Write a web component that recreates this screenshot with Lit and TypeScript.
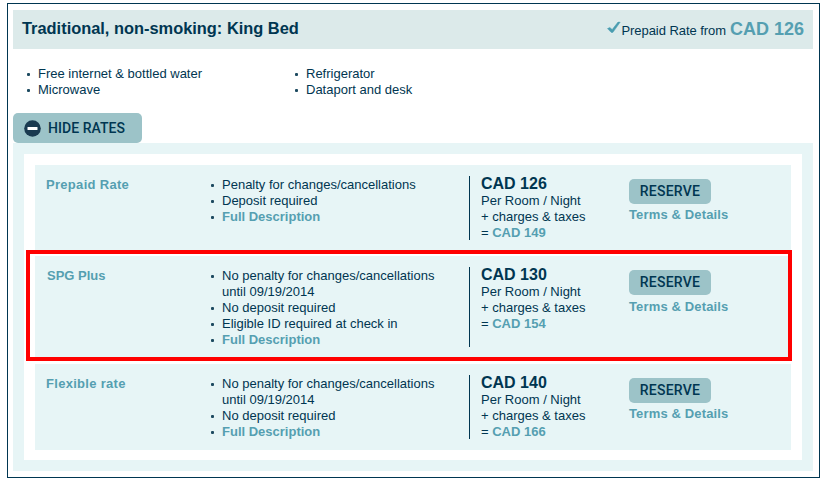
import { LitElement, html, css } from "lit";
import { customElement, property } from "lit/decorators.js";
import { classMap } from "lit/directives/class-map.js";

interface Rate {
  name: string;
  terms: string[];
  price: string;
  total: string;
  highlighted?: boolean;
}

const RATES: Rate[] = [
  {
    name: "Prepaid Rate",
    terms: ["Penalty for changes/cancellations", "Deposit required"],
    price: "CAD 126",
    total: "CAD 149",
  },
  {
    name: "SPG Plus",
    terms: [
      "No penalty for changes/cancellations until 09/19/2014",
      "No deposit required",
      "Eligible ID required at check in",
    ],
    price: "CAD 130",
    total: "CAD 154",
    highlighted: true,
  },
  {
    name: "Flexible rate",
    terms: [
      "No penalty for changes/cancellations until 09/19/2014",
      "No deposit required",
    ],
    price: "CAD 140",
    total: "CAD 166",
  },
];

const bulletList = css`
  ul {
    list-style: none;
    margin: 0;
    padding: 1px 0 0;
  }
  li {
    position: relative;
    padding-left: 11px;
  }
  li:last-child {
    height: 15px;
  }
  li::before {
    content: "";
    position: absolute;
    left: 0;
    top: 7px;
    width: 3px;
    height: 3px;
    border-radius: 1px;
    background: #1d4a60;
  }
`;

@customElement("rate-row")
export class RateRow extends LitElement {
  @property({ attribute: false }) rate!: Rate;

  static styles = [
    bulletList,
    css`
      :host {
        display: grid;
        grid-template-columns: 165px 258px 160px 1fr;
        padding: 11px;
        background: #e7f5f6;
      }
      .name,
      .link {
        color: #559fb1;
        font-weight: bold;
      }
      .name {
        padding-top: 1px;
        letter-spacing: 0.3px;
      }
      .name.highlighted {
        padding-left: 1px;
        letter-spacing: 0;
      }
      .terms {
        width: 240px;
      }
      .cost {
        border-left: 1px solid #003651;
        padding-left: 11px;
      }
      .price {
        font-size: 16px;
        font-weight: bold;
        line-height: 16px;
        margin-bottom: 1px;
      }
      .total {
        height: 15px;
      }
      .action {
        padding-top: 3px;
      }
      button {
        display: block;
        width: 82px;
        height: 25px;
        padding: 0;
        border: 0;
        border-radius: 5px;
        background: #9cc3c8;
        color: #003651;
        font: 500 14px/25px Roboto, "Liberation Sans", sans-serif;
        letter-spacing: 0.25px;
        margin-bottom: 3px;
      }
      .highlighted button {
        margin-bottom: 4px;
      }
      .details {
        letter-spacing: 0.14px;
      }
    `,
  ];

  render() {
    const r = this.rate;
    const highlighted = !!r.highlighted;
    return html`
      <div class=${classMap({ name: true, highlighted })}>${r.name}</div>
      <ul class="terms">
        ${r.terms.map((t) => html`<li>${t}</li>`)}
        <li><span class="link">Full Description</span></li>
      </ul>
      <div class="cost">
        <div class="price">${r.price}</div>
        <div>Per Room / Night</div>
        <div>+ charges &amp; taxes</div>
        <div class="total">= <span class="link">${r.total}</span></div>
      </div>
      <div class=${classMap({ action: true, highlighted })}>
        <button>RESERVE</button>
        <span class="link details">Terms &amp; Details</span>
      </div>
    `;
  }
}

@customElement("app-root")
export class AppRoot extends LitElement {
  static styles = [
    bulletList,
    css`
      :host {
        display: block;
        box-sizing: border-box;
        height: 479px;
        padding: 3px 0 0 7px;
        background: #fff;
        color: #003651;
        font: 13px/16px "Liberation Sans", Arial, sans-serif;
      }
      .frame {
        position: relative;
        box-sizing: border-box;
        width: 813px;
        height: 475px;
        border: 1px solid #003651;
        padding: 6px 6px 6px 5px;
      }
      header {
        display: flex;
        align-items: center;
        justify-content: space-between;
        height: 39px;
        padding: 0 9px;
        box-sizing: border-box;
        background: #dceaea;
      }
      h1 {
        margin: 0;
        padding-bottom: 4px;
        font-size: 16.4px;
        line-height: 20px;
      }
      .from {
        display: flex;
        align-items: baseline;
        padding-bottom: 2px;
        letter-spacing: -0.06px;
      }
      .from svg {
        width: 15px;
        height: 15px;
      }
      .from strong {
        margin-left: 4px;
        font-size: 18px;
        line-height: 20px;
        letter-spacing: 0;
        color: #559fb1;
      }
      .amenities {
        display: grid;
        grid-template-columns: 268px 268px;
        padding: 16px 14px;
      }
      .toggle {
        display: flex;
        align-items: center;
        width: 129px;
        height: 30px;
        padding: 0 0 0 11px;
        box-sizing: border-box;
        border: 0;
        border-radius: 5px;
        background: #9cc3c8;
        color: #003651;
        font: 500 14px/30px Roboto, "Liberation Sans", sans-serif;
        letter-spacing: 0.05px;
      }
      .toggle svg {
        width: 17px;
        height: 17px;
        margin-right: 7px;
      }
      .panel {
        border: 11px solid #e7f5f6;
        padding: 11px 11px 10px;
      }
      rate-row + rate-row {
        margin-top: 5px;
      }
      rate-row:last-of-type {
        margin-top: 6px;
      }
      .highlight {
        position: absolute;
        left: 18px;
        top: 246px;
        box-sizing: border-box;
        width: 766px;
        height: 111px;
        border: 4px solid #f00;
      }
    `,
  ];

  render() {
    return html`
      <div class="frame">
        <header>
          <h1>Traditional, non-smoking: King Bed</h1>
          <div class="from">
            <svg viewBox="0 0 15 15">
              <path d="M.5 8.4 3.6 6.8 6.2 9.2 12.2 .8l2.4 .2L6.8 13.4H5z" fill="#fff" opacity=".8" />
              <path d="M1.4 8.6 3.8 7.4 6.2 9.6 12 2h2.2L6.8 12.6H5.2z" fill="#4a9db0" stroke="#4a9db0" stroke-width=".6" />
            </svg>
            <span>Prepaid Rate from</span>
            <strong>CAD 126</strong>
          </div>
        </header>
        <div class="amenities">
          <ul>
            <li>Free internet &amp; bottled water</li>
            <li>Microwave</li>
          </ul>
          <ul>
            <li>Refrigerator</li>
            <li>Dataport and desk</li>
          </ul>
        </div>
        <button class="toggle">
          <svg viewBox="0 0 17 17">
            <circle cx="8.5" cy="8.5" r="8.3" fill="#1a3a50" />
            <rect x="3.5" y="7" width="10" height="3" rx=".5" fill="#fff" />
          </svg>
          <span>HIDE RATES</span>
        </button>
        <div class="panel">
          ${RATES.map((rate) => html`<rate-row .rate=${rate}></rate-row>`)}
        </div>
        <div class="highlight"></div>
      </div>
    `;
  }
}
